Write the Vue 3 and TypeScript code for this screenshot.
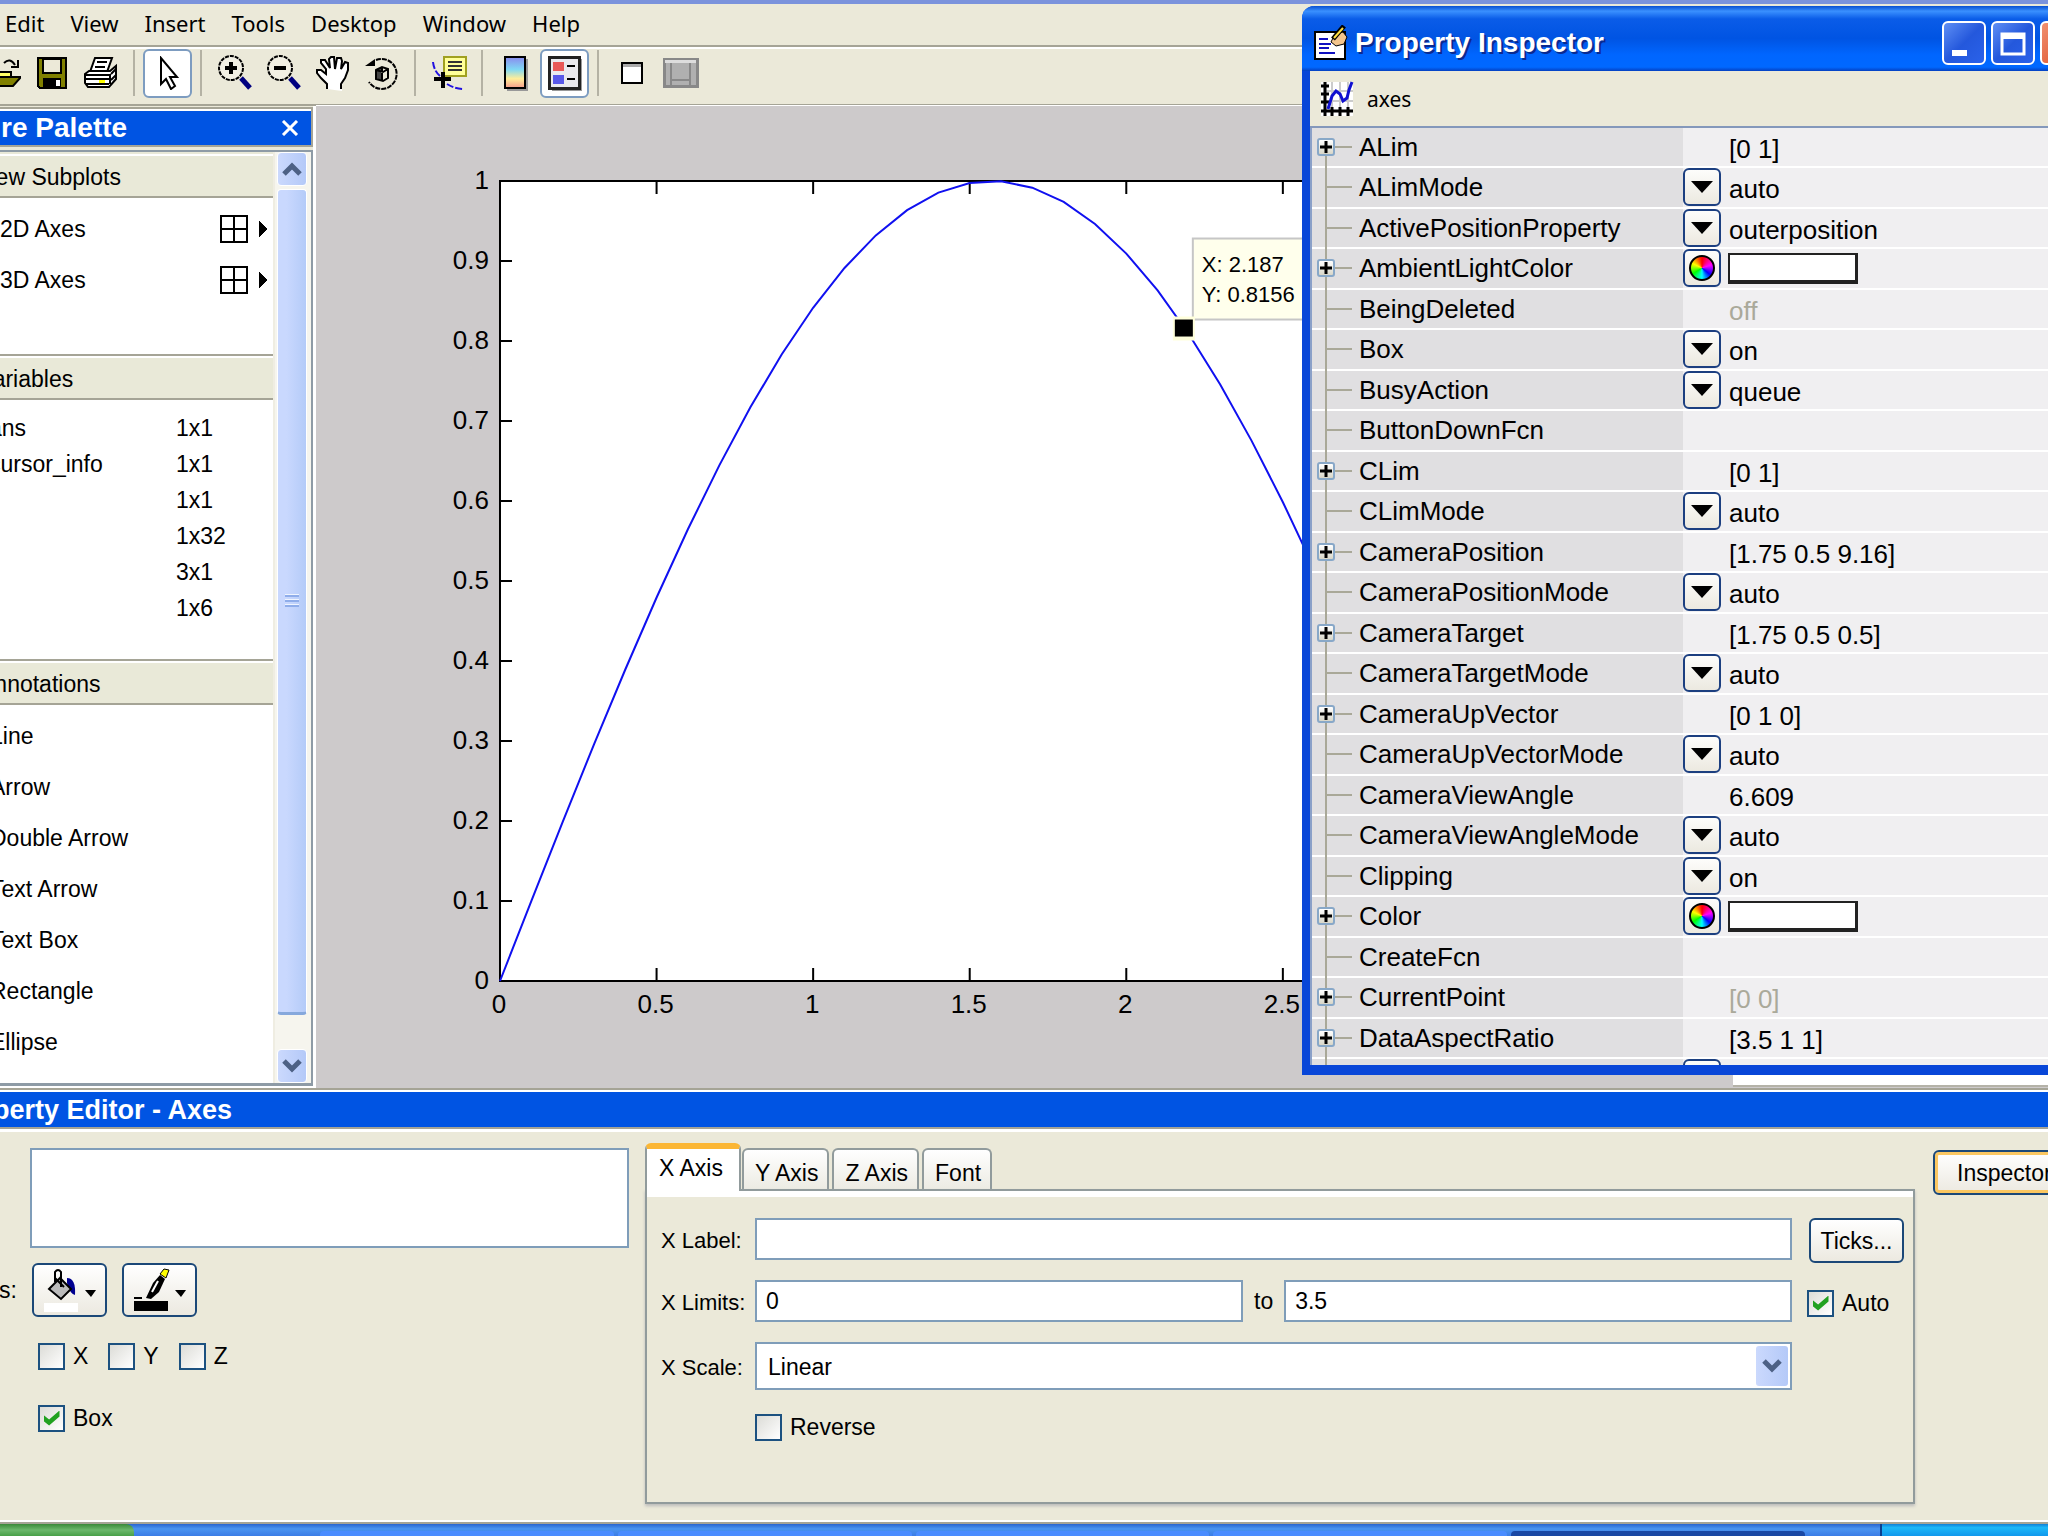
<script setup lang="ts">
import { computed, ref } from 'vue'

interface Property {
  name: string
  value?: string
  kind?: 'menu' | 'color'
  group?: boolean
  readonly?: boolean
}

const menus = ['Edit', 'View', 'Insert', 'Tools', 'Desktop', 'Window', 'Help']

const subplots = ['2D Axes', '3D Axes']

const variables = [
  { name: 'ans', size: '1x1' },
  { name: 'cursor_info', size: '1x1' },
  { name: '', size: '1x1' },
  { name: '', size: '1x32' },
  { name: '', size: '3x1' },
  { name: '', size: '1x6' },
]

const annotations = ['Line', 'Arrow', 'Double Arrow', 'Text Arrow', 'Text Box', 'Rectangle', 'Ellipse']

const properties: Property[] = [
  { name: 'ALim', value: '[0 1]', group: true },
  { name: 'ALimMode', value: 'auto', kind: 'menu' },
  { name: 'ActivePositionProperty', value: 'outerposition', kind: 'menu' },
  { name: 'AmbientLightColor', kind: 'color', group: true },
  { name: 'BeingDeleted', value: 'off', readonly: true },
  { name: 'Box', value: 'on', kind: 'menu' },
  { name: 'BusyAction', value: 'queue', kind: 'menu' },
  { name: 'ButtonDownFcn' },
  { name: 'CLim', value: '[0 1]', group: true },
  { name: 'CLimMode', value: 'auto', kind: 'menu' },
  { name: 'CameraPosition', value: '[1.75 0.5 9.16]', group: true },
  { name: 'CameraPositionMode', value: 'auto', kind: 'menu' },
  { name: 'CameraTarget', value: '[1.75 0.5 0.5]', group: true },
  { name: 'CameraTargetMode', value: 'auto', kind: 'menu' },
  { name: 'CameraUpVector', value: '[0 1 0]', group: true },
  { name: 'CameraUpVectorMode', value: 'auto', kind: 'menu' },
  { name: 'CameraViewAngle', value: '6.609' },
  { name: 'CameraViewAngleMode', value: 'auto', kind: 'menu' },
  { name: 'Clipping', value: 'on', kind: 'menu' },
  { name: 'Color', kind: 'color', group: true },
  { name: 'CreateFcn' },
  { name: 'CurrentPoint', value: '[0 0]', group: true, readonly: true },
  { name: 'DataAspectRatio', value: '[3.5 1 1]', group: true },
  { name: '', kind: 'menu' },
]

const tabs = ['X Axis', 'Y Axis', 'Z Axis', 'Font']
const activeTab = ref('X Axis')

const xLabel = ref('')
const xMin = ref('0')
const xMax = ref('3.5')
const xScale = ref('Linear')
const autoLimits = ref(true)
const reverse = ref(false)
const axesTitle = ref('')
const grid = ref<string[]>([])
const boxOn = ref(true)

// Plot geometry, in pixels of the figure canvas
const plot = { left: 184, right: 1280, top: 75, bottom: 875 }
const px = (x: number) => plot.left + (x / 3.5) * (plot.right - plot.left)
const py = (y: number) => plot.bottom - y * (plot.bottom - plot.top)

const xTicks = [0, 0.5, 1, 1.5, 2, 2.5]
const yTicks = [0, 0.1, 0.2, 0.3, 0.4, 0.5, 0.6, 0.7, 0.8, 0.9, 1]

const curve = computed(() =>
  Array.from({ length: 32 }, (_, i) => i / 10)
    .map((x) => `${px(x).toFixed(1)},${py(Math.sin(x)).toFixed(1)}`)
    .join(' '),
)
const tip = { x: px(2.187), y: py(0.8156) }
</script>

<template>
  <div class="screen">
    <div class="upper">
      <div class="title-edge"></div>
      <nav class="menubar">
        <a v-for="m in menus" :key="m" href="#">{{ m }}</a>
      </nav>

      <div class="toolbar">
        <button class="tool" aria-label="Open">
          <svg width="36" height="36" viewBox="0 0 36 36">
            <path d="M2 32V14h8l3 3h13v6" fill="#ffff66" stroke="#000" stroke-width="2" />
            <path d="M3 31L9 22h27l-8 9z" fill="#808000" stroke="#000" stroke-width="2" />
            <path d="M19 8q6-6 11 2M33 5v7h-7" fill="none" stroke="#000" stroke-width="2" />
          </svg>
        </button>
        <button class="tool" aria-label="Save">
          <svg width="30" height="32" viewBox="0 0 30 32" shape-rendering="crispEdges">
            <path d="M1 1h28v30H3l-2-2z" fill="#808000" stroke="#000" stroke-width="2" />
            <path d="M6 2h18v14H6z" fill="#ece9d8" stroke="#000" stroke-width="2" />
            <path d="M6 21h18v10H6z" />
            <path d="M19 23h4v6h-4z" fill="#fff" />
          </svg>
        </button>
        <button class="tool" aria-label="Print">
          <svg width="36" height="34" viewBox="0 0 36 34">
            <path d="M12 2h17l-5 14H7z" fill="#fff" stroke="#000" stroke-width="2" />
            <path d="M14 6h10M12 11h10" stroke="#000" stroke-width="2" />
            <path d="M2 18l4-3h21l6-5v13l-7 8H5l-3-4z" fill="#fff" stroke="#000" stroke-width="2" />
            <path d="M2 19h25v9M2 23h24M3 28h23M28 18l5-5M28 24l5-5" fill="none" stroke="#000" stroke-width="2" />
            <path d="M16 24h6v3h-6z" fill="#ff0" />
          </svg>
        </button>
        <i class="sep"></i>
        <button class="tool on" aria-label="Edit plot">
          <svg width="24" height="34" viewBox="0 0 24 34">
            <path d="M5 2v26l5-5 5 10 4-3-5-9h7z" fill="#fff" stroke="#000" stroke-width="2" />
          </svg>
        </button>
        <i class="sep"></i>
        <button class="tool" aria-label="Zoom in">
          <svg width="36" height="36" viewBox="0 0 36 36">
            <path d="M24 23l9 10" stroke="#000080" stroke-width="5" />
            <circle cx="14" cy="13" r="12" fill="#f2f0e4" stroke="#000" stroke-width="2" stroke-dasharray="4 1" />
            <path d="M8 13h12M14 7v12" stroke="#000" stroke-width="4" />
          </svg>
        </button>
        <button class="tool" aria-label="Zoom out">
          <svg width="36" height="36" viewBox="0 0 36 36">
            <path d="M24 23l9 10" stroke="#000080" stroke-width="5" />
            <circle cx="14" cy="13" r="12" fill="#f2f0e4" stroke="#000" stroke-width="2" stroke-dasharray="4 1" />
            <path d="M8 13h12" stroke="#000" stroke-width="4" />
          </svg>
        </button>
        <button class="tool" aria-label="Pan">
          <svg width="36" height="36" viewBox="0 0 36 36">
            <path
              d="M12 34v-5L6 22 2 18v-3h4l5 3L6 8V5h4l5 9-1-11h4l2 11 2-11h4v12l4-8h3v9l-3 8-3 6v6z"
              fill="#fff"
            />
            <path
              d="M12 34v-5L6 23 2 18v-3h4l5 4V14L6 8V5h4l5 8-1-9 2-2h3l1 12 2-11h4l1 3-1 8 4-7 3 1v7l-3 8-4 6v5"
              fill="none" stroke="#000" stroke-width="2"
            />
          </svg>
        </button>
        <button class="tool" aria-label="Rotate 3D">
          <svg width="36" height="36" viewBox="0 0 36 36">
            <path d="M12 5A15 15 0 1 1 5 27" fill="none" stroke="#000" stroke-width="2" stroke-dasharray="5 1" />
            <path d="M1 11h10V4z" />
            <path d="M12 15l5-2v12l-5-2z" fill="#444" />
            <path d="M12 15l6-3 6 2v9l-5 3-7-2zM18 12v13M12 15l7 2 5-3" fill="none" stroke="#000" stroke-width="2" />
          </svg>
        </button>
        <i class="sep"></i>
        <button class="tool" aria-label="Data cursor">
          <svg width="36" height="36" viewBox="0 0 36 36">
            <path d="M2 7q1 9 7 14M16 29q8 5 17 5" fill="none" stroke="#2010e0" stroke-width="2" stroke-dasharray="7 2" />
            <path d="M13 2h22v19H13z" fill="#ffff99" stroke="#a0a020" stroke-width="2" />
            <path d="M17 7h14M17 11h14M17 15h14" stroke="#333" stroke-width="2" />
            <path d="M3 24h17M12 17v16" stroke="#000" stroke-width="4" />
          </svg>
        </button>
        <i class="sep"></i>
        <button class="tool" aria-label="Insert colorbar">
          <svg width="26" height="36" viewBox="0 0 26 36">
            <defs>
              <linearGradient id="bar" x2="0" y2="1">
                <stop offset="0" stop-color="#8a8aee" />
                <stop offset=".4" stop-color="#7fd8f4" />
                <stop offset=".7" stop-color="#ffee99" />
                <stop offset="1" stop-color="#f49a8a" />
              </linearGradient>
            </defs>
            <path d="M4 4h21v32H4z" fill="#999" />
            <path d="M2 2h20v31H2z" fill="url(#bar)" stroke="#000" stroke-width="2" />
          </svg>
        </button>
        <button class="tool on" aria-label="Insert legend">
          <svg width="34" height="36" viewBox="0 0 34 36" shape-rendering="crispEdges">
            <path d="M4 4h30v32H4z" fill="#999" />
            <path d="M1 2h30v31H1z" fill="#e9e9ee" stroke="#222" stroke-width="3" />
            <path d="M5 7h11v9H5z" fill="#e85858" />
            <path d="M5 20h11v9H5z" fill="#5858e8" />
            <path d="M19 11h8M19 24h8" stroke="#000" stroke-width="2" />
          </svg>
        </button>
        <i class="sep"></i>
        <button class="tool" aria-label="Hide plot tools">
          <svg width="24" height="24" viewBox="0 0 24 24" shape-rendering="crispEdges">
            <path d="M2 2h20v20H2z" fill="#fff" stroke="#000" stroke-width="2" />
            <path d="M3 3h18v3H3z" fill="#aaa" />
          </svg>
        </button>
        <button class="tool" aria-label="Show plot tools">
          <svg width="36" height="30" viewBox="0 0 36 30" shape-rendering="crispEdges">
            <path d="M1 1h33v27H1z" fill="#b0b0b0" stroke="#888" stroke-width="3" />
            <path d="M2 2h31v3H2z" fill="#ddd" />
            <path d="M8 5v22M27 5v22M8 22h19" stroke="#888" stroke-width="2" />
          </svg>
        </button>
      </div>

      <div class="work">
        <aside class="palette">
          <header class="dock-title palette-title">
            <h2>Figure Palette</h2>
            <button class="dock-close" aria-label="Close">
              <svg width="18" height="16" viewBox="0 0 18 16">
                <path d="M2 1l14 14M16 1L2 15" stroke="#fff" stroke-width="3" />
              </svg>
            </button>
          </header>
          <div class="palette-body">
            <div class="sections">
              <h3>New Subplots</h3>
              <ul class="subplots">
                <li v-for="s in subplots" :key="s">
                  <span>{{ s }}</span>
                  <svg width="48" height="28" viewBox="0 0 48 28" shape-rendering="crispEdges">
                    <path d="M1 1h26v26H1zM14 1v26M1 14h26" fill="none" stroke="#000" stroke-width="2" />
                    <path d="M39 6l8 8-8 8z" />
                  </svg>
                </li>
              </ul>
              <h3>Variables</h3>
              <ul class="variables">
                <li v-for="(v, i) in variables" :key="i">
                  <span>{{ v.name }}</span><span>{{ v.size }}</span>
                </li>
              </ul>
              <h3>Annotations</h3>
              <ul class="annotations">
                <li v-for="a in annotations" :key="a">{{ a }}</li>
              </ul>
            </div>
            <div class="scrollbar">
              <button class="scroll-btn" aria-label="Scroll up">
                <svg width="20" height="14" viewBox="0 0 20 14"><path d="M2 12l8-8 8 8" fill="none" stroke="#4d6185" stroke-width="5" /></svg>
              </button>
              <div class="thumb"><i></i><i></i><i></i></div>
              <button class="scroll-btn" aria-label="Scroll down">
                <svg width="20" height="14" viewBox="0 0 20 14"><path d="M2 2l8 8 8-8" fill="none" stroke="#4d6185" stroke-width="5" /></svg>
              </button>
            </div>
          </div>
        </aside>

        <main class="figure">
          <svg class="canvas" width="100%" height="100%">
            <rect :x="plot.left" :y="plot.top" :width="plot.right - plot.left" :height="plot.bottom - plot.top" fill="#fff" stroke="#000" stroke-width="2" />
            <g v-for="x in xTicks" :key="'x' + x">
              <path :d="`M${px(x)} ${plot.bottom}v-13M${px(x)} ${plot.top}v13`" stroke="#000" stroke-width="2" />
              <text :x="px(x) - 1" y="907" text-anchor="middle">{{ x }}</text>
            </g>
            <g v-for="y in yTicks" :key="'y' + y">
              <path :d="`M${plot.left} ${py(y)}h12`" stroke="#000" stroke-width="2" />
              <text x="173" :y="py(y) + 8" text-anchor="end">{{ y }}</text>
            </g>
            <polyline :points="curve" fill="none" stroke="#1010f0" stroke-width="2" />
            <rect :x="tip.x + 8" :y="tip.y - 90" width="160" height="81" fill="#ffffec" stroke="#c6c6c6" stroke-width="2" />
            <text class="tip" :x="tip.x + 17" :y="tip.y - 57">X: 2.187</text>
            <text class="tip" :x="tip.x + 17" :y="tip.y - 27">Y: 0.8156</text>
            <rect :x="tip.x - 12" :y="tip.y - 12" width="22" height="24" fill="#ffffdc" />
            <rect :x="tip.x - 10" :y="tip.y - 9" width="18" height="17" />
          </svg>
          <div class="under"></div>
        </main>
      </div>

      <section class="inspector">
        <header class="inspector-title">
          <svg width="34" height="36" viewBox="0 0 34 36">
            <path d="M1 7h30v27H1z" fill="#fff" stroke="#000" stroke-width="2" />
            <path d="M5 14h9M5 19h12M5 23h10M5 28h16" stroke="#1010c0" stroke-width="2" />
            <path d="M17 17l4-8 8-2 4 5-3 7-8 2z" fill="#f2c48c" stroke="#000" stroke-width="1" />
            <path d="M19 14L30 1" stroke="#000" stroke-width="5" />
            <path d="M20 13L29 3" stroke="#ffe040" stroke-width="2" />
          </svg>
          <h1>Property Inspector</h1>
          <button class="win-btn" aria-label="Minimize">
            <svg width="36" height="36" viewBox="0 0 36 36"><path d="M6 25h15v6H6z" fill="#fff" /></svg>
          </button>
          <button class="win-btn" aria-label="Maximize">
            <svg width="36" height="36" viewBox="0 0 36 36"><path d="M7 9h22v20H7z" fill="none" stroke="#fff" stroke-width="3" /><path d="M6 8h24v6H6z" fill="#fff" /></svg>
          </button>
          <button class="win-btn close" aria-label="Close">
            <svg width="36" height="36" viewBox="0 0 36 36"><path d="M8 8l20 20M28 8L8 28" stroke="#fff" stroke-width="5" /></svg>
          </button>
        </header>
        <div class="object-bar">
          <svg width="34" height="36" viewBox="0 0 34 36">
            <path d="M1 1h32v34H1z" fill="#fff" />
            <path d="M12 1v30M20 1v30M28 1v30M5 10h28M5 20h28" stroke="#ccc" stroke-width="2" />
            <path d="M5 1v34M1 30h32M1 5h8M1 13h8M1 21h8M12 26v9M20 26v9M28 26v9" stroke="#000" stroke-width="3" />
            <path d="M8 28l4-13 4-5 4 3 3 7 4-3 2-8 3-8" fill="none" stroke="#1010d0" stroke-width="3" />
          </svg>
          <span>axes</span>
        </div>
        <div class="grid-view">
          <table>
            <tbody>
              <tr v-for="p in properties" :key="p.name">
                <th scope="row">
                  <div class="name">
                    <button v-if="p.group" class="expand" :aria-label="'Expand ' + p.name">
                      <svg width="12" height="12" viewBox="0 0 12 12"><path d="M0 6h12M6 0v12" stroke="#000" stroke-width="3" /></svg>
                    </button>
                    <span>{{ p.name }}</span>
                  </div>
                </th>
                <td>
                  <div class="value" :class="{ muted: p.readonly }">
                    <button v-if="p.kind === 'menu'" class="cell-btn" :aria-label="'Choose ' + p.name">
                      <svg width="22" height="12" viewBox="0 0 22 12"><path d="M0 0h22L11 12z" /></svg>
                    </button>
                    <button v-if="p.kind === 'color'" class="cell-btn" :aria-label="'Pick ' + p.name">
                      <i class="wheel"></i>
                    </button>
                    <i v-if="p.kind === 'color'" class="swatch"></i>
                    <span>{{ p.value }}</span>
                  </div>
                </td>
              </tr>
            </tbody>
          </table>
        </div>
      </section>
    </div>

    <section class="editor">
      <header class="dock-title editor-title"><h2>Property Editor - Axes</h2></header>
      <div class="editor-body">
        <div class="general">
          <textarea v-model="axesTitle" aria-label="Title"></textarea>
          <div class="colors">
            <span>Colors:</span>
            <button class="pick" aria-label="Fill color">
              <svg width="54" height="46" viewBox="0 0 54 46">
                <path d="M2 36h34v9H2z" fill="#fff" />
                <path d="M25 11q9 0 8 17q-5-1-8-12z" fill="#000090" />
                <path d="M7 22l11-11 11 11-10 10z" fill="#bbb" stroke="#000" stroke-width="2" />
                <path d="M13 15V5q3-4 6 0v15M13 11l9 9" fill="none" stroke="#000" stroke-width="2" />
                <path d="M43 23h11l-5 7z" />
              </svg>
            </button>
            <button class="pick" aria-label="Line color">
              <svg width="54" height="46" viewBox="0 0 54 46">
                <path d="M2 34h34v10H2zM2 30h8v2H2z" />
                <path d="M14 31l7-15 7-8 5 4-6 13-8 7z" />
                <path d="M20 25l6-11" stroke="#fff" stroke-width="2" />
                <path d="M28 7l4-5 5 1-3 8z" fill="#ff0" stroke="#000" stroke-width="1" />
                <path d="M43 23h11l-5 7z" />
              </svg>
            </button>
          </div>
          <div class="checks">
            <label v-for="g in ['X', 'Y', 'Z']" :key="g"><input v-model="grid" type="checkbox" :value="g" />{{ g }}</label>
          </div>
          <div class="checks">
            <label><input v-model="boxOn" type="checkbox" />Box</label>
          </div>
        </div>

        <div class="tabset">
          <div class="tabs" role="tablist">
            <button v-for="t in tabs" :key="t" role="tab" :class="{ active: t === activeTab }" @click="activeTab = t">{{ t }}</button>
          </div>
          <form class="tab-page" @submit.prevent>
            <label for="xlabel">X Label:</label>
            <input id="xlabel" v-model="xLabel" type="text" />
            <button type="button" class="push">Ticks...</button>

            <label for="xmin">X Limits:</label>
            <div class="limits">
              <input id="xmin" v-model="xMin" type="text" />
              <label for="xmax">to</label>
              <input id="xmax" v-model="xMax" type="text" />
            </div>
            <label class="auto"><input v-model="autoLimits" type="checkbox" />Auto</label>

            <label for="xscale">X Scale:</label>
            <div class="combo">
              <select id="xscale" v-model="xScale">
                <option>Linear</option>
                <option>Log</option>
              </select>
              <span class="combo-arrow">
                <svg width="20" height="14" viewBox="0 0 20 14"><path d="M2 2l8 8 8-8" fill="none" stroke="#4d6185" stroke-width="5" /></svg>
              </span>
            </div>

            <label class="reverse"><input v-model="reverse" type="checkbox" />Reverse</label>
          </form>
        </div>

        <div class="more"><button class="push focus">Inspector...</button></div>
      </div>
    </section>

    <footer class="taskbar">
      <i class="start"></i>
      <div class="tasks"><i></i><i></i><i></i><i></i><i class="pressed"></i></div>
      <i class="tray"></i>
    </footer>
  </div>
</template>

<style>
body {
  margin: 0;
  overflow: hidden;
}
</style>

<style scoped>
* {
  box-sizing: border-box;
}
.screen {
  display: flex;
  flex-direction: column;
  height: 100vh;
  overflow: hidden;
  background: #ebe9d9;
  color: #000;
  font: 23px/28px "Liberation Sans", Arial, sans-serif;
}
button {
  padding: 0;
  border: 0;
  background: none;
  color: inherit;
  font: inherit;
}
svg {
  display: block;
  flex: none;
}
h1, h2, h3, ul {
  margin: 0;
  padding: 0;
  font: inherit;
  list-style: none;
}

/* Main window */
.upper {
  position: relative;
  display: flex;
  flex: 1;
  flex-direction: column;
  min-height: 0;
}
.title-edge {
  height: 4px;
  background: #7b93dc;
}
.menubar {
  display: flex;
  gap: 26px;
  height: 43px;
  padding: 5px 5px 0;
  border-bottom: 2px solid #a5a496;
  font: 22px/28px "Noto Sans", sans-serif;
}
.menubar a {
  color: inherit;
  text-decoration: none;
}
.toolbar {
  display: flex;
  align-items: center;
  height: 59px;
  margin-left: -22px;
  padding-bottom: 7px;
  border-top: 2px solid #fff;
  border-bottom: 2px solid #a5a496;
}
.tool {
  display: flex;
  flex: none;
  align-items: center;
  justify-content: center;
  width: 49px;
  height: 49px;
}
.tool.on {
  border: 2px solid #7d9cc0;
  border-radius: 6px;
  background: #fff;
}
.sep {
  flex: none;
  width: 2px;
  height: 46px;
  margin: 0 8px;
  background: #b4b2a4;
}
.work {
  display: flex;
  flex: 1;
  min-height: 0;
}

/* Docked panels */
.dock-title {
  display: flex;
  align-items: center;
  background: #0054e3;
  color: #fff;
  font: bold 27px/34px "Liberation Sans", Arial, sans-serif;
}
.palette {
  display: flex;
  flex: none;
  flex-direction: column;
  width: 316px;
  padding-top: 1px;
  border-right: 3px solid #fff;
  border-bottom: 2px solid #fff;
}
.palette-title {
  flex: none;
  height: 40px;
  padding: 2px 12px 0 0;
  border-top: 2px solid #a5a496;
  border-bottom: 2px solid #a5a496;
  border-right: 2px solid #a5a496;
  box-shadow: inset 0 2px #fff;
}
.palette-title h2 {
  flex: 1;
  margin-left: -58px;
  font-size: 28px;
}
.palette-body {
  display: flex;
  flex: 1;
  min-height: 0;
  margin-top: 3px;
  border: 2px solid #8e9ba6;
  border-left: 0;
  border-bottom: 3px solid #8e9ba6;
  background: #fff;
}
.sections {
  flex: 1;
  overflow: hidden;
}
h3 {
  height: 46px;
  padding-top: 9px;
  border-top: 2px solid #a5a496;
  border-bottom: 2px solid #a5a496;
  background: #e9e9d8;
  box-shadow: inset 0 2px #fff;
  text-indent: -21px;
}
h3:first-child {
  border-top-color: #e9e9d8;
}
.subplots {
  padding: 5px 5px 49px 0;
}
.subplots li {
  display: flex;
  align-items: center;
  justify-content: space-between;
  height: 51px;
}
.variables {
  margin-left: -11px;
  padding: 10px 0 33px;
}
.variables li {
  display: grid;
  grid-template-columns: 187px 1fr;
  height: 36px;
  line-height: 36px;
}
.annotations {
  margin-left: -10px;
  padding-top: 6px;
  line-height: 51px;
}
.scrollbar {
  display: flex;
  flex-direction: column;
  width: 38px;
  padding: 0 4px 0 2px;
  border-left: 2px solid #efede2;
  background: #f6f5ee;
}
.scroll-btn {
  display: grid;
  place-items: center;
  height: 34px;
  border: 1px solid #fff;
  border-radius: 4px;
  background: linear-gradient(90deg, #cbd9fd, #b4c9f8);
}
.thumb {
  display: flex;
  flex: 1;
  flex-direction: column;
  justify-content: center;
  gap: 3px;
  margin: 3px 0 34px;
  padding: 0 7px;
  border: 1px solid #fff;
  border-bottom: 3px solid #86a8dc;
  border-radius: 4px;
  background: linear-gradient(90deg, #c9d8fe 30%, #b4cbf8);
}
.thumb i {
  height: 2px;
  background: #8fadea;
  box-shadow: 0 -1px #eef4fe;
}

/* Figure */
.figure {
  position: relative;
  flex: 1;
  min-width: 0;
  margin-top: -1px;
  overflow: hidden;
  border-top: 1px solid #fff;
  background: #cdcacb;
}
.canvas {
  font-size: 26px;
}
.tip {
  font-size: 22px;
}
.under {
  position: absolute;
  right: 0;
  bottom: 1px;
  left: 1417px;
  height: 14px;
  border-bottom: 2px solid #b4b2a8;
  background: #fff;
}

/* Property Inspector window */
.inspector {
  position: absolute;
  top: 6px;
  right: -40px;
  bottom: 13px;
  left: 1302px;
  display: flex;
  flex-direction: column;
  border: solid #0846d8;
  border-width: 0 8px 10px;
  border-radius: 12px 12px 0 0;
  background: #ebe9d9;
}
.inspector-title {
  display: flex;
  flex: none;
  align-items: center;
  gap: 5px;
  height: 65px;
  margin: 0 -8px;
  padding: 8px 4px 0 12px;
  border-radius: 12px 12px 0 0;
  background: linear-gradient(#0a4fd0, #3a90ff 8%, #0a5ce8 20%, #0054e3 50%, #0066ff 75%, #0068ff 94%, #0540c0);
  color: #fff;
}
.inspector-title h1 {
  flex: 1;
  margin-left: 2px;
  font: bold 28px/32px "Liberation Sans", Arial, sans-serif;
  text-shadow: 2px 2px #0a2a90;
}
.win-btn {
  display: grid;
  place-items: center;
  width: 44px;
  height: 44px;
  border: 2px solid #fff;
  border-radius: 6px;
  background: linear-gradient(135deg, #5f8ff5, #2458dc 50%, #2a62ea);
}
.win-btn.close {
  background: linear-gradient(135deg, #f09070, #dc4a20);
}
.object-bar {
  display: flex;
  flex: none;
  align-items: center;
  gap: 13px;
  height: 57px;
  padding: 0 10px;
  border-bottom: 2px solid #8498bb;
  font: 21px/28px "Noto Sans", sans-serif;
}
.grid-view {
  flex: 1;
  min-height: 0;
  overflow: hidden;
  border-left: 2px solid #8aa0c8;
}
table {
  width: 100%;
  border-spacing: 0;
  table-layout: fixed;
  font-size: 26px;
}
tr {
  height: 41px;
}
tr:nth-child(odd) {
  height: 40px;
}
th, td {
  padding: 0;
  vertical-align: top;
}
th {
  width: 371px;
  background:
    linear-gradient(#a9a898, #a9a898) 13px 0 / 2px 100% no-repeat,
    linear-gradient(#a9a898, #a9a898) 14px 18px / 26px 2px no-repeat,
    linear-gradient(#fff, #fff) 0 100% / 100% 2px no-repeat,
    #e0dfe1;
  font-weight: normal;
  text-align: left;
}
td {
  background: linear-gradient(#fff, #fff) 0 100% / 100% 2px no-repeat, #f0eff1;
}
tr:first-child th {
  background-position: 13px 100%, 14px 18px, 0 100%, 0 0;
  background-size: 2px 20px, 26px 2px, 100% 2px, auto;
}
.name {
  display: flex;
  align-items: center;
  height: 38px;
}
.name span {
  margin-left: 47px;
}
.expand {
  display: grid;
  place-items: center;
  width: 18px;
  height: 18px;
  margin-left: 5px;
  border: 2px solid #88a8c8;
  border-radius: 3px;
  background: linear-gradient(#fff, #d8d6c8);
}
.expand + span {
  margin-left: 24px;
}
.value {
  display: flex;
  align-items: center;
  height: 38px;
}
.value span {
  padding: 3px 0 0 46px;
}
.cell-btn {
  display: grid;
  place-items: center;
  width: 38px;
  height: 38px;
  border: 2px solid #1c3f80;
  border-radius: 6px;
  background: linear-gradient(#fdfdfb, #ece9e0);
}
.cell-btn + span {
  padding-left: 8px;
}
.wheel {
  width: 26px;
  height: 26px;
  border: 2px solid #000;
  border-radius: 50%;
  background: conic-gradient(#f00, #f0f 20%, #00f 36%, #0ff 50%, #0f0 66%, #ff0 82%, #f00);
}
.swatch {
  width: 130px;
  height: 31px;
  margin-left: 7px;
  border: 2px solid #222;
  border-width: 2px 3px 4px 2px;
  background: #fff;
}
.muted {
  color: #aaa99a;
}

/* Property Editor */
.editor {
  flex: none;
  border-top: 2px solid #a5a496;
  border-bottom: 2px solid #a5a496;
}
.editor-title {
  height: 39px;
  border-top: 2px solid #fff;
  border-bottom: 2px solid #a5a496;
}
.editor-title h2 {
  margin-left: -52px;
}
.editor-body {
  display: flex;
  height: 393px;
  border-top: 3px solid #fff;
  border-bottom: 2px solid #fff;
  overflow: hidden;
}
.general {
  display: flex;
  flex: none;
  flex-direction: column;
  width: 645px;
  padding: 16px 16px 0 30px;
}
textarea,
input[type='text'],
select {
  border: 2px solid #7f9db9;
  border-radius: 0;
  outline: 0;
  background: #fff;
  color: inherit;
  font: inherit;
}
textarea {
  height: 100px;
  resize: none;
}
.colors {
  display: flex;
  align-items: center;
  gap: 15px;
  margin: 15px 0 25px -86px;
}
.pick {
  display: grid;
  place-items: center;
  width: 75px;
  height: 54px;
  border: 2px solid #1b4878;
  border-radius: 6px;
  background: linear-gradient(#fff, #ece9e0);
}
.checks {
  display: flex;
  gap: 20px;
  margin: 0 0 34px 8px;
}
.checks label,
.auto,
.reverse {
  display: flex;
  align-items: center;
  gap: 8px;
}
input[type='checkbox'] {
  display: grid;
  place-items: center;
  width: 27px;
  height: 27px;
  margin: 0;
  border: 2px solid #1c5180;
  background: linear-gradient(135deg, #dcdcd7, #fff);
  appearance: none;
}
input[type='checkbox']:checked::after {
  width: 16px;
  height: 15px;
  background: #21a121;
  clip-path: polygon(0 30%, 35% 60%, 100% 0, 100% 40%, 35% 100%, 0 70%);
  content: '';
}
.tabset {
  display: flex;
  flex: 1;
  flex-direction: column;
  min-width: 0;
  padding: 11px 0 16px;
}
.tabs {
  display: flex;
  align-items: flex-end;
  gap: 3px;
  height: 46px;
}
.tabs button {
  height: 41px;
  padding: 6px 9px 0 11px;
  border: 2px solid #919b9c;
  border-bottom: 0;
  border-radius: 6px 6px 0 0;
  background: linear-gradient(#fff, #ecebe3);
}
.tabs button:not(.active) {
  min-width: 63px;
}
.tabs .active {
  z-index: 1;
  height: 48px;
  margin: 0 -2px -2px 0;
  padding: 0 16px 5px 12px;
  border-top: 6px solid #fbb634;
  background: #fff;
}
.tab-page {
  display: grid;
  flex: 1;
  grid-template-columns: 94px 1fr 111px;
  grid-template-rows: 42px 42px 48px 30px;
  align-content: start;
  gap: 20px 0;
  align-items: center;
  padding: 27px 10px 0 14px;
  border: 2px solid #919b9c;
  box-shadow: inset 0 6px #fff, 0 2px 3px #bbb;
}
.tab-page > label {
  padding-top: 4px;
}
.tab-page > label[for] {
  font-size: 22px;
}
.tab-page input[type='text'] {
  width: 100%;
  min-width: 0;
  height: 42px;
  padding: 1px 9px 0;
}
.push {
  height: 45px;
  border: 2px solid #1b4878;
  border-radius: 6px;
  background: linear-gradient(#fff, #ece9e0);
}
.tab-page .push {
  width: 95px;
  margin: 3px 0 0 17px;
}
.limits {
  display: grid;
  grid-template-columns: 488px auto 1fr;
  gap: 11px;
  align-items: center;
}
.auto {
  margin-left: 15px;
}
.combo {
  position: relative;
  grid-column: 2;
}
.combo select {
  width: 100%;
  height: 48px;
  padding: 2px 11px 0;
  appearance: none;
}
.combo-arrow {
  position: absolute;
  top: 4px;
  right: 4px;
  display: grid;
  place-items: center;
  width: 32px;
  height: 40px;
  border-radius: 3px;
  background: linear-gradient(90deg, #cbd9fd, #b4c9f8);
  pointer-events: none;
}
.reverse {
  grid-column: 2;
}
.more {
  flex: none;
  width: 133px;
  padding: 18px 0 0 18px;
}
.push.focus {
  width: 160px;
  padding-left: 22px;
  box-shadow: inset 0 0 0 3px #fbc761;
  text-align: left;
}

/* Taskbar */
.taskbar {
  display: flex;
  flex: none;
  height: 12px;
  background: linear-gradient(#2a66d0, #4a94f0 40%, #3a7ce6);
}
.start {
  width: 134px;
  border-radius: 0 8px 0 0;
  background: linear-gradient(#3a8a3a, #6cb86c 50%, #48a048);
}
.tasks {
  display: flex;
  flex: 1;
  gap: 4px;
  margin-right: 75px;
  padding: 7px 0 0 186px;
}
.tasks i {
  flex: 1;
  border-radius: 4px 4px 0 0;
  background: #4a8cff;
}
.tasks .pressed {
  background: #1a48a4;
}
.tray {
  width: 168px;
  border-left: 2px solid #0a3f90;
  background: linear-gradient(#1080d8, #1cb8f8 30%, #1198ec);
}
</style>
